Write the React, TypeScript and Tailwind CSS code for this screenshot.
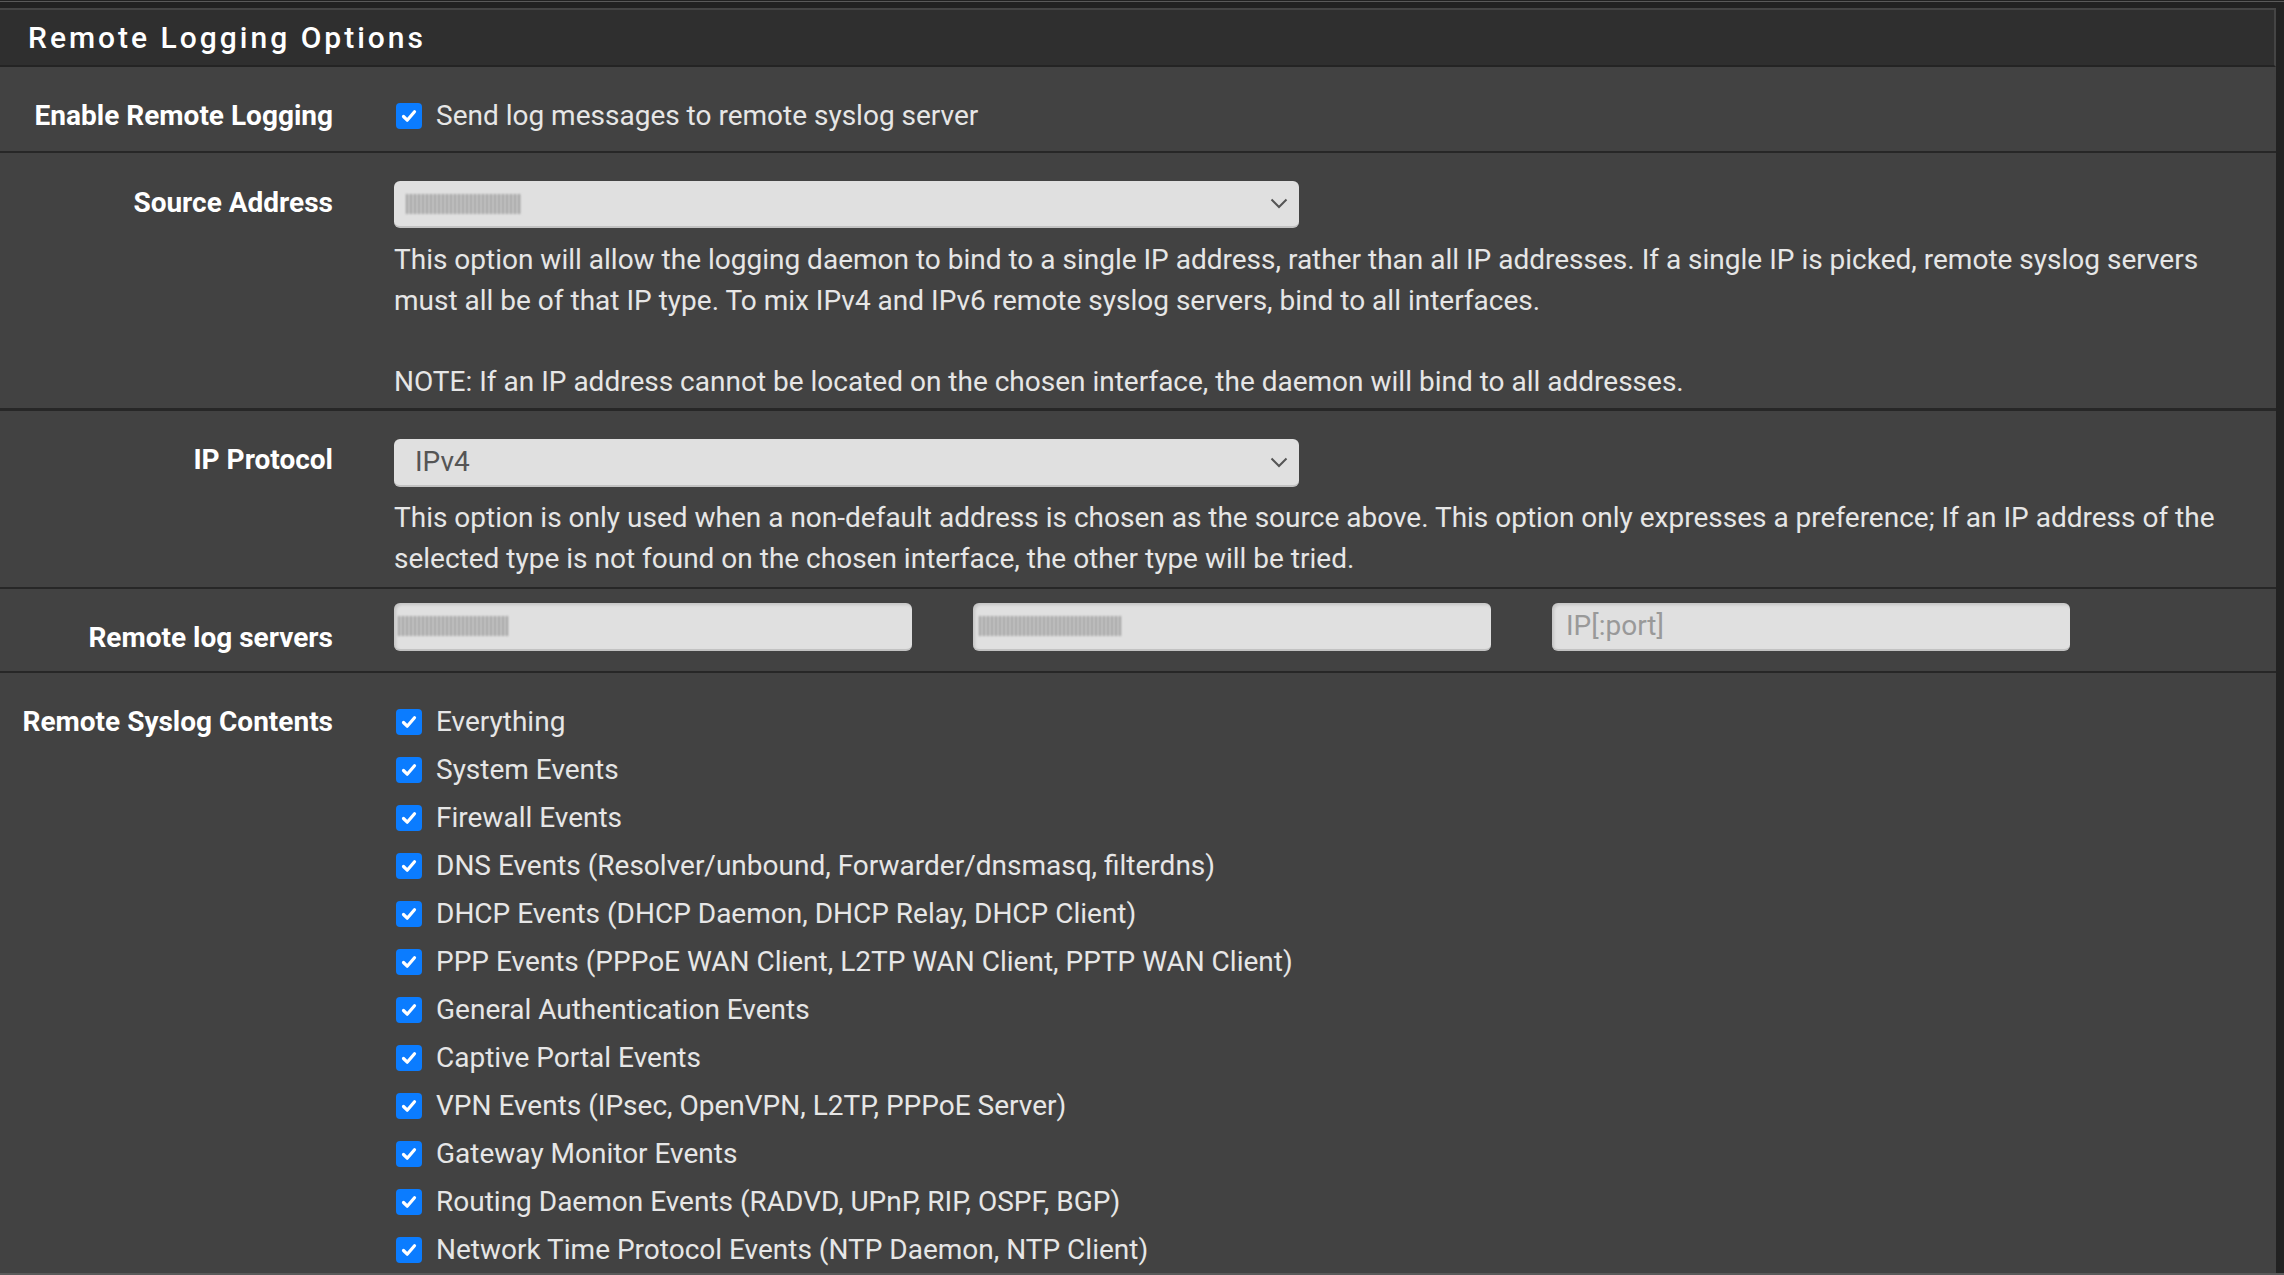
import React from "react";

const Check = () => (
  <div className="w-[26px] h-[26px] rounded-[4px] bg-[#0b7cff] flex items-center justify-center shrink-0">
    <svg width="18" height="18" viewBox="0 0 18 18">
      <path d="M3.5 9.5 L7.2 13.2 L14.5 4.8" fill="none" stroke="#ffffff" strokeWidth="3.2" strokeLinecap="round" strokeLinejoin="round" />
    </svg>
  </div>
);

const Chevron = () => (
  <svg width="18" height="11" viewBox="0 0 18 11">
    <polyline points="1.5,1.5 9,9 16.5,1.5" fill="none" stroke="#555555" strokeWidth="2" />
  </svg>
);

const Blob = ({ w }: { w: string }) => (
  <div className={`${w} h-[20px] blur-[1.2px] opacity-80 bg-[repeating-linear-gradient(90deg,#8a8a8a_0px,#8a8a8a_2px,#d0d0d0_2px,#d0d0d0_4px)]`} />
);

const Label = ({ children, pt }: { children: React.ReactNode; pt: string }) => (
  <div className={`w-[333px] shrink-0 text-right font-bold text-white text-[28px] leading-[40.5px] ${pt}`}>
    {children}
  </div>
);

const items = [
  "Everything",
  "System Events",
  "Firewall Events",
  "DNS Events (Resolver/unbound, Forwarder/dnsmasq, filterdns)",
  "DHCP Events (DHCP Daemon, DHCP Relay, DHCP Client)",
  "PPP Events (PPPoE WAN Client, L2TP WAN Client, PPTP WAN Client)",
  "General Authentication Events",
  "Captive Portal Events",
  "VPN Events (IPsec, OpenVPN, L2TP, PPPoE Server)",
  "Gateway Monitor Events",
  "Routing Daemon Events (RADVD, UPnP, RIP, OSPF, BGP)",
  "Network Time Protocol Events (NTP Daemon, NTP Client)",
];

export default function App() {
  return (
    <div className="w-[2284px] h-[1275px] bg-[#222222] flex flex-col overflow-hidden font-['Roboto',sans-serif] text-[#e6e6e6]">
      <div className="h-[1px] shrink-0" />
      <div className="h-[1px] shrink-0 bg-[#5a5a5a]" />
      <div className="h-[6px] shrink-0" />
      <div className="flex-1 min-h-0 overflow-hidden w-[2276px] flex flex-col">
        {/* Heading */}
        <div className="h-[59px] shrink-0 bg-[#2f2f2f] border-t-2 border-r-2 border-[#454545] border-b-2 border-b-[#242424] flex items-center pl-[28px]">
          <span className="text-[30px] font-medium tracking-[3px] text-white">Remote Logging Options</span>
        </div>

        {/* Enable */}
        <div className="h-[86px] shrink-0 bg-[#424242] border-b-2 border-[#272727] flex">
          <Label pt="pt-[29px]">Enable Remote Logging</Label>
          <div className="ml-[63px] pt-[29px]">
            <div className="flex items-center h-[40.5px] gap-[14px]">
              <Check />
              <span className="text-[28px] leading-[40.5px]">Send log messages to remote syslog server</span>
            </div>
          </div>
        </div>

        {/* Source Address */}
        <div className="h-[258px] shrink-0 bg-[#424242] border-b-[3px] border-[#272727] flex">
          <Label pt="pt-[30px]">Source Address</Label>
          <div className="ml-[61px] pt-[28px] flex flex-col">
            <div className="w-[905px] h-[47px] rounded-[6px] bg-[#e0e0e0] border-b-2 border-[#c2c2c2] flex items-center justify-between pl-[12px] pr-[11px]">
              <Blob w="w-[115px]" />
              <Chevron />
            </div>
            <div className="mt-[12px] text-[28px] leading-[40.5px] whitespace-nowrap">
              This option will allow the logging daemon to bind to a single IP address, rather than all IP addresses. If a single IP is picked, remote syslog servers
              <br />
              must all be of that IP type. To mix IPv4 and IPv6 remote syslog servers, bind to all interfaces.
              <br />
              <br />
              NOTE: If an IP address cannot be located on the chosen interface, the daemon will bind to all addresses.
            </div>
          </div>
        </div>

        {/* IP Protocol */}
        <div className="h-[178px] shrink-0 bg-[#424242] border-b-2 border-[#272727] flex">
          <Label pt="pt-[29px]">IP Protocol</Label>
          <div className="ml-[61px] pt-[28px] flex flex-col">
            <div className="w-[905px] h-[48px] rounded-[6px] bg-[#e0e0e0] border-b-2 border-[#c2c2c2] flex items-center justify-between pl-[21px] pr-[11px]">
              <span className="text-[28px] text-[#555555]">IPv4</span>
              <Chevron />
            </div>
            <div className="mt-[11px] text-[28px] leading-[40.5px] whitespace-nowrap">
              This option is only used when a non-default address is chosen as the source above. This option only expresses a preference; If an IP address of the
              <br />
              selected type is not found on the chosen interface, the other type will be tried.
            </div>
          </div>
        </div>

        {/* Remote log servers */}
        <div className="h-[84px] shrink-0 bg-[#424242] border-b-2 border-[#272727] flex">
          <Label pt="pt-[29px]">Remote log servers</Label>
          <div className="ml-[61px] pt-[14px] flex gap-[61px]">
            <div className="w-[518px] h-[48px] rounded-[6px] bg-[#e0e0e0] border-b-2 border-[#c2c2c2] shadow-[inset_2px_2px_3px_rgba(0,0,0,0.12)] flex items-center pl-[4px]">
              <Blob w="w-[110px]" />
            </div>
            <div className="w-[518px] h-[48px] rounded-[6px] bg-[#e0e0e0] border-b-2 border-[#c2c2c2] shadow-[inset_2px_2px_3px_rgba(0,0,0,0.12)] flex items-center pl-[6px]">
              <Blob w="w-[142px]" />
            </div>
            <div className="w-[518px] h-[48px] rounded-[6px] bg-[#e0e0e0] border-b-2 border-[#c2c2c2] shadow-[inset_2px_2px_3px_rgba(0,0,0,0.12)] flex items-center pl-[14px]">
              <span className="text-[28px] text-[#999999]">IP[:port]</span>
            </div>
          </div>
        </div>

        {/* Remote Syslog Contents */}
        <div className="flex-1 min-h-0 bg-[#424242] flex">
          <Label pt="pt-[29px]">Remote Syslog Contents</Label>
          <div className="ml-[63px] pt-[29px] flex flex-col">
            {items.map((t) => (
              <div key={t} className="h-[48px] shrink-0 flex items-start">
                <div className="flex items-center h-[40.5px] gap-[14px]">
                  <Check />
                  <span className="text-[28px] leading-[40.5px] whitespace-nowrap">{t}</span>
                </div>
              </div>
            ))}
          </div>
        </div>
      </div>
      <div className="h-[2px] shrink-0 bg-[#5a5a5a]" />
    </div>
  );
}
